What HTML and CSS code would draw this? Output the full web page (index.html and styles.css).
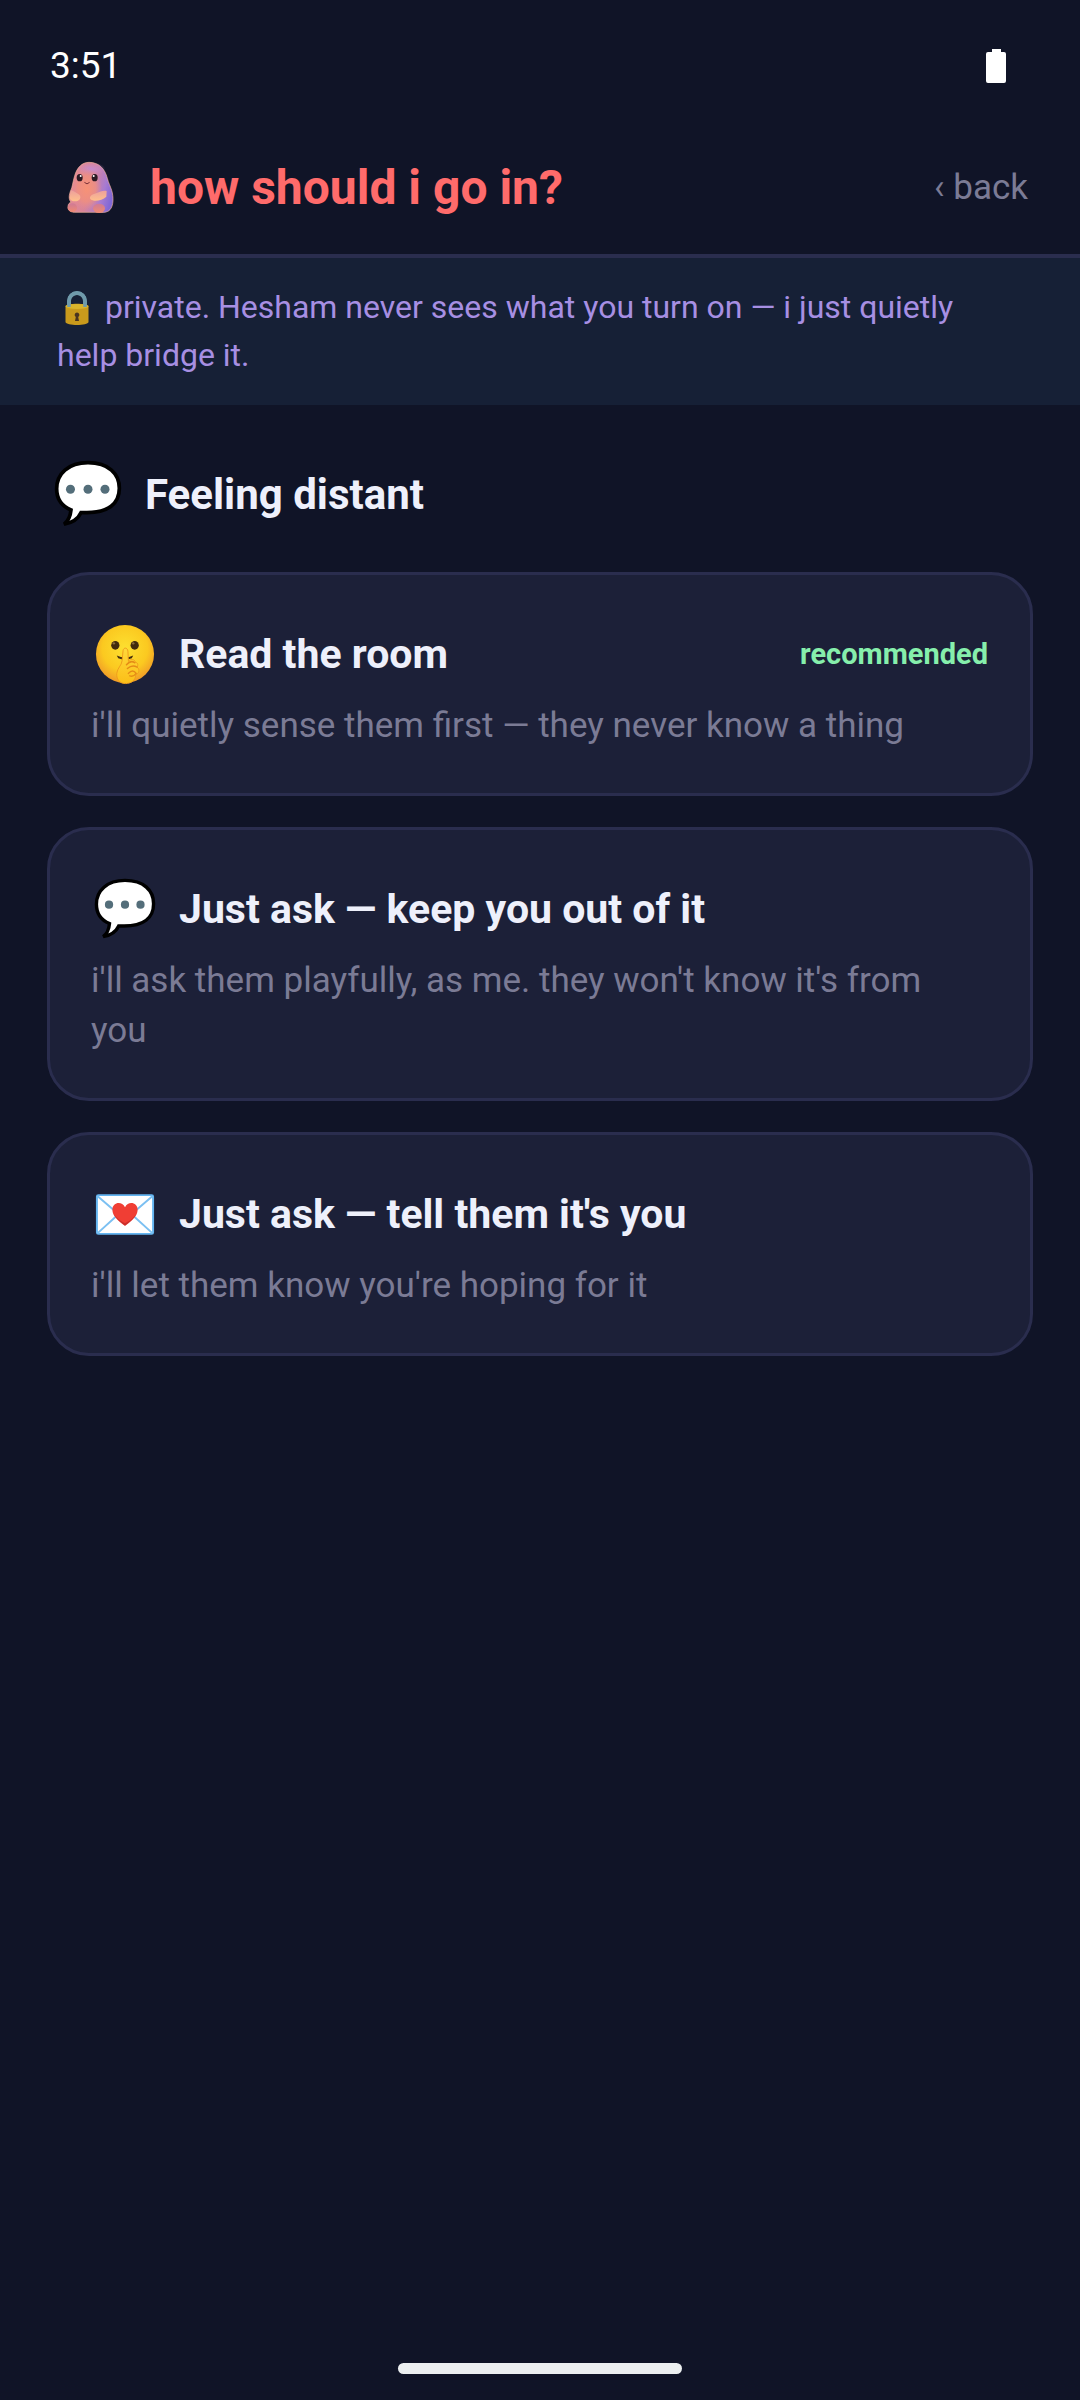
FILE: index.html
```html
<!DOCTYPE html>
<html lang="en">
<head>
<meta charset="utf-8">
<meta name="viewport" content="width=device-width, initial-scale=1">
<title>how should i go in?</title>
<link rel="stylesheet" href="styles.css">
</head>
<body>
<div class="screen">
  <div class="status">
    <span>3:51</span>
    <svg class="battery" viewBox="0 0 20 34" aria-hidden="true"><path fill="#fff" d="M6 0h9v3h3a2 2 0 0 1 2 2v27a2 2 0 0 1-2 2H2a2 2 0 0 1-2-2V5a2 2 0 0 1 2-2h4z"/></svg>
  </div>

  <header class="topbar">
    <svg class="mascot" viewBox="0 6 240 240" aria-hidden="true">
      <defs>
        <linearGradient id="body" x1="0" y1="0.3" x2="1" y2="0.6">
          <stop offset="0" stop-color="#e88d92"/><stop offset="0.5" stop-color="#d98498"/><stop offset="0.8" stop-color="#a87bd0"/><stop offset="1" stop-color="#8268d6"/>
        </linearGradient>
        <radialGradient id="belly"><stop offset="0" stop-color="#f79276"/><stop offset="0.6" stop-color="#f0907f" stop-opacity=".8"/><stop offset="1" stop-color="#e88d92" stop-opacity="0"/></radialGradient>
        <radialGradient id="crown"><stop offset="0" stop-color="#c48cd0"/><stop offset="1" stop-color="#c48cd0" stop-opacity="0"/></radialGradient>
        <linearGradient id="limb" x1="0" y1="0" x2="0" y2="1"><stop offset="0" stop-color="#eda09c"/><stop offset="1" stop-color="#ffc08c"/></linearGradient>
        <linearGradient id="foot" x1="0" y1="0" x2="0" y2="1"><stop offset="0" stop-color="#cf7a96"/><stop offset="1" stop-color="#f08a72"/></linearGradient>
      </defs>
      <path fill="url(#body)" stroke="#f2b49c" stroke-width="2" d="M117 52C147 52 165 72 172 100C176 115 180 121 185 136C191 156 191 182 180 194C172 203 158 203 146 202L78 202C62 203 53 196 54 184C54 177 59 173 63 171C55 164 57 148 62 137C68 124 68 112 74 92C81 68 96 52 117 52Z"/>
      <ellipse cx="124" cy="72" rx="42" ry="20" fill="url(#crown)"/>
      <ellipse cx="110" cy="132" rx="46" ry="64" fill="url(#belly)"/>
      <path fill="url(#limb)" d="M62 136C70 136 78 144 86 148C94 153 92 164 84 167C74 171 61 169 59 158Z"/>
      <path fill="url(#limb)" d="M170 138C158 135 148 142 134 146C122 149 117 157 122 163C130 171 156 168 169 155Z"/>
      <ellipse cx="67" cy="188" rx="14" ry="13" fill="url(#foot)"/>
      <ellipse cx="147" cy="190" rx="18" ry="14" fill="url(#foot)"/>
      <g fill="#2a1a24"><ellipse cx="89" cy="98" rx="9" ry="11"/><ellipse cx="134" cy="98" rx="9" ry="11"/></g>
      <g fill="#fff"><circle cx="92" cy="93" r="3"/><circle cx="131" cy="93" r="3"/></g>
      <path d="M104 113Q111 121 118 113" fill="none" stroke="#7a3038" stroke-width="3" stroke-linecap="round"/>
    </svg>
    <h1 class="title">how should i go in?</h1>
    <a class="back" href="#">‹ back</a>
  </header>

  <p class="notice"><svg class="lock" viewBox="0 0 40 34" aria-hidden="true"><path d="M12 17V10a8 8 0 0 1 16 0v7" fill="none" stroke="#6f9aab" stroke-width="4"/><path d="M8.500 15C9 12 31 12 31.500 15V31C31 35 9 35 8.500 31Z" fill="#c99a1c"/><ellipse cx="20" cy="15.500" rx="11.500" ry="2.500" fill="#d9b42c"/><path d="M12 16V10a8 8 0 0 1 16 0v6" fill="none" stroke="#6f9aab" stroke-width="3.500"/><path d="M20 21.500a2.500 2.500 0 0 1 1.200 4.600L22 30h-4l.8-3.900A2.500 2.500 0 0 1 20 21.500Z" fill="#4a3520"/></svg> private. Hesham never sees what you turn on — i just quietly help bridge it.</p>

  <main class="content">
    <h2 class="topic">
      <svg class="topic-icon" viewBox="0 0 128 128" aria-hidden="true"><use href="#bubble"/></svg>
      Feeling distant
    </h2>

    <button class="card" type="button">
      <span class="card-head">
        <svg class="card-icon" viewBox="0 0 128 128" aria-hidden="true">
          <defs><radialGradient id="face" cx=".5" cy=".4" r=".6"><stop offset="0" stop-color="#fde030"/><stop offset=".65" stop-color="#fbc920"/><stop offset="1" stop-color="#f09a28"/></radialGradient>
          <linearGradient id="hand" x1="0" y1="0" x2="0" y2="1"><stop offset="0" stop-color="#ffd83a"/><stop offset="1" stop-color="#fbbf18"/></linearGradient></defs>
          <circle cx="64" cy="64" r="60" fill="url(#face)"/>
          <g fill="#422b0d"><ellipse cx="44" cy="46" rx="8.500" ry="9"/><ellipse cx="84" cy="46" rx="8.500" ry="9"/><path d="M47 67Q64 75 81 67L78 73Q64 79 50 73Z"/></g>
          <g fill="#8a6a3a"><circle cx="41" cy="42" r="2.500"/><circle cx="81" cy="42" r="2.500"/></g>
          <path d="M60 57C61 50 69 50 70 58L71 79C76 73 85 75 85 81C93 82 90 90 89 91C96 97 92 105 86 107C86 119 76 125 65 125C52 125 46 115 47 104C48 93 57 88 58 78Z" fill="url(#hand)" stroke="#ee9c1c" stroke-width="2"/>
          <path d="M67 86Q76 76 84 82M69 94Q79 85 89 91M71 104Q80 94 87 104Q81 112 74 109" fill="none" stroke="#e58c16" stroke-width="3" stroke-linecap="round"/>
        </svg>
        <span class="card-title">Read the room</span>
        <span class="tag">recommended</span>
      </span>
      <span class="card-text">i'll quietly sense them first — they never know a thing</span>
    </button>

    <button class="card" type="button">
      <span class="card-head">
        <svg class="card-icon" viewBox="0 0 128 128" aria-hidden="true">
          <g id="bubble"><path d="M64 5C103 5 123 26 123 53C123 82 102 99 62 99L51 99C46 110 36 118 19 121C28 114 31 105 32 94C13 86 5 72 5 54C5 26 27 5 64 5Z" fill="#fff" stroke="#000" stroke-width="7"/>
          <g fill="#546e7a"><circle cx="31" cy="55" r="8.500"/><circle cx="64" cy="55" r="8.500"/><circle cx="96" cy="55" r="8.500"/></g></g>
        </svg>
        <span class="card-title">Just ask — keep you out of it</span>
      </span>
      <span class="card-text">i'll ask them playfully, as me. they won't know it's from you</span>
    </button>

    <button class="card" type="button">
      <span class="card-head">
        <svg class="card-icon" viewBox="0 0 128 128" aria-hidden="true">
          <rect x="6" y="25" width="116" height="80" rx="3" fill="#fff" stroke="#64b5f1" stroke-width="4"/>
          <path d="M7 27L55 68Q64 75 73 68L121 27M7 104L51 64M121 104L77 64" fill="none" stroke="#7bc0f2" stroke-width="4"/>
          <path d="M64 88C49 78 38 67 38 55C38 40 57 36 64 50C71 36 90 40 90 55C90 67 79 78 64 88Z" fill="#f03e34"/>
          <path d="M39 61C43 71 53 80 64 88C75 80 85 71 89 61C83 72 74 78 64 83C54 78 45 72 39 61Z" fill="#c9302c"/>
        </svg>
        <span class="card-title">Just ask — tell them it's you</span>
      </span>
      <span class="card-text">i'll let them know you're hoping for it</span>
    </button>
  </main>

  <div class="home-bar"></div>
</div>
</body>
</html>
```
FILE: styles.css
```css
* { box-sizing: border-box; }
body {
  margin: 0;
  background: #101427;
  color: #eef0fb;
  font-family: Roboto, "Liberation Sans", sans-serif;
}
svg { flex: none; display: block; }
.screen {
  min-height: 100vh;
  display: flex;
  flex-direction: column;
}
.status {
  display: flex;
  align-items: center;
  justify-content: space-between;
  height: 120px;
  padding: 11px 74px 0 50px;
  font-size: 37px;
  color: #fff;
}
.battery { width: 20px; height: 34px; }
.topbar {
  display: flex;
  align-items: center;
  height: 138px;
  padding: 0 52px 0 50px;
  border-bottom: 4px solid #2a2d4e;
}
.mascot { width: 80px; height: 80px; }
.title {
  flex: 1;
  margin: 0 0 0 20px;
  font-size: 48px;
  font-weight: 700;
  color: #ff6b6b;
}
.back {
  font-size: 35px;
  color: #7b7b95;
  text-decoration: none;
}
.notice {
  margin: 0;
  padding: 25px 68px 26px 57px;
  background: #162036;
  color: #a78fe3;
  font-size: 32px;
  line-height: 48px;
}
.lock {
  display: inline-block;
  width: 40px;
  height: 34px;
  vertical-align: -7px;
}
.content {
  display: flex;
  flex-direction: column;
  gap: 31px;
  padding: 45px 47px;
}
.topic {
  display: flex;
  align-items: center;
  gap: 23px;
  height: 88px;
  margin: 0 0 3px;
  padding-left: 7px;
  font-size: 42px;
  font-weight: 700;
}
.topic-icon { width: 68px; height: 68px; }
.card {
  display: flex;
  flex-direction: column;
  gap: 10px;
  padding: 42px 42px 42px 41px;
  border: 3px solid #2a2d4e;
  border-radius: 42px;
  background: #1c2038;
  color: inherit;
  font-family: inherit;
  text-align: left;
}
.card-head {
  display: flex;
  align-items: center;
  align-self: stretch;
  gap: 20px;
  height: 74px;
}
.card-icon { width: 68px; height: 62px; }
.card-title {
  flex: 1;
  font-size: 41px;
  font-weight: 700;
}
.tag {
  font-size: 29px;
  font-weight: 700;
  color: #86efac;
}
.card-text {
  padding-right: 16px;
  font-size: 35px;
  line-height: 50px;
  color: #7b7b95;
}
.home-bar {
  width: 284px;
  height: 11px;
  margin: auto auto 26px;
  border-radius: 6px;
  background: #eceff0;
}
```
